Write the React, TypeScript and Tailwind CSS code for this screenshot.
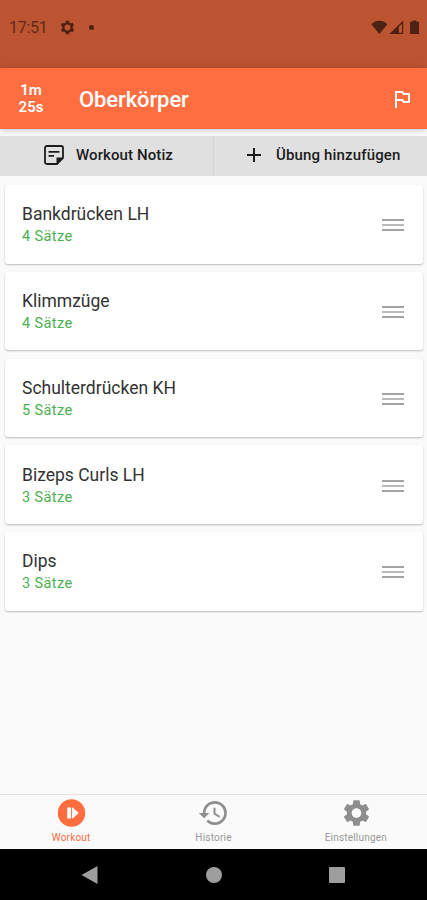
import { MdAdd, MdHistory, MdOutlinedFlag, MdSettings } from 'react-icons/md';

type Exercise = {
  name: string;
  sets: number;
};

const exercises: Exercise[] = [
  { name: 'Bankdrücken LH', sets: 4 },
  { name: 'Klimmzüge', sets: 4 },
  { name: 'Schulterdrücken KH', sets: 5 },
  { name: 'Bizeps Curls LH', sets: 3 },
  { name: 'Dips', sets: 3 },
];

function StatusGear() {
  return (
    <svg className="ml-[13px] mt-[3px]" width="15" height="15" viewBox="0 0 16 16" fill="none" stroke="currentColor">
      <circle cx="8" cy="8" r="4.500" strokeWidth="2.600" />
      <path
        d="M8 .8v2.400M8 12.800v2.400M1.760 4.400l2.100 1.200M12.140 10.400l2.100 1.200M1.760 11.600l2.100-1.200M12.140 5.600l2.100-1.200"
        strokeWidth="3.400"
      />
    </svg>
  );
}

function StatusBar() {
  return (
    <div className="h-[68px] bg-[#bc5331] flex items-start pt-[17px] pl-[9px] pr-[7px] text-[#4d2114]">
      <span className="text-[16px] leading-[22px] w-[38px] tracking-[-0.3px] whitespace-nowrap text-[#622a19]">17:51</span>
      <StatusGear />
      <span className="ml-[14px] mt-[8px] size-[5px] rounded-full bg-[#4d2114]" />
      <svg className="ml-auto mt-[3px]" width="49" height="15" viewBox="0 0 49 15" fill="currentColor">
        <path d="M.4 4.200C4.800-.4 12-.4 16.400 4.200L8.400 14z" />
        <path d="M18.400 14L32.200 .5V14zM27.800 6.800V12.700H31V3.800z" fillRule="evenodd" />
        <path d="M39 1.800h2.500V.4h4v1.400H48V14H39z" />
      </svg>
    </div>
  );
}

function NoteIcon() {
  return (
    <svg className="-mt-[2px]" width="20" height="20" viewBox="0 0 20 20" fill="none" stroke="currentColor" strokeWidth="1.800">
      <path d="M13 19H2.800A1.800 1.800 0 0 1 1 17.200V2.800A1.800 1.800 0 0 1 2.800 1H17.200A1.800 1.800 0 0 1 19 2.800V13z" />
      <path d="M12.500 19.500V12.500H19.500z" fill="currentColor" stroke="none" />
      <path d="M4.500 6.800H15.500M4.500 10.800H10" />
    </svg>
  );
}

function WorkoutIcon() {
  return (
    <svg className="translate-x-[0.500px]" width="28" height="28" viewBox="0 0 28 28">
      <circle cx="14" cy="14" r="13.700" fill="#ff6c3e" />
      <path d="M9.700 8.500h3.900v11H9.700zM14.600 8.500h.6l6 5.500-6 5.500h-.6z" fill="#fff" />
    </svg>
  );
}

function DragHandle() {
  return (
    <div className="w-[22px] mt-[2px] flex flex-col gap-[3px]">
      <div className="h-[2px] bg-[#a3a3a3]" />
      <div className="h-[2px] bg-[#b9b9b9]" />
      <div className="h-[2px] bg-[#a3a3a3]" />
    </div>
  );
}

function ExerciseCard({ exercise }: { exercise: Exercise }) {
  return (
    <div className="h-[78.500px] bg-white rounded-[3px] shadow-[0_1px_2px_rgba(0,0,0,0.26)] flex items-center justify-between pl-[17px] pr-[19.500px]">
      <div className="pt-[2px]">
        <div className="text-[17.500px] leading-[23px] text-[#333]">{exercise.name}</div>
        <div className="text-[14.500px] leading-[21px] text-[#4caf50] tracking-[0.400px]">{exercise.sets} Sätze</div>
      </div>
      <DragHandle />
    </div>
  );
}

export default function App() {
  return (
    <div className="w-full h-[900px] bg-[#fafafa] flex flex-col overflow-hidden font-['Roboto',sans-serif]">
      <StatusBar />

      <header className="h-[61px] bg-[#ff6e40] text-white flex items-center pr-[13px] shadow-[0_1px_6px_rgba(0,0,0,0.22)]">
        <div className="w-[62px] text-center text-[15px] leading-[17px] font-semibold">
          1m
          <br />
          25s
        </div>
        <h1 className="ml-[17px] pt-[2px] text-[22px] leading-[28px] font-medium tracking-[-0.1px]">Oberkörper</h1>
        <MdOutlinedFlag className="ml-auto size-6" />
      </header>

      <div className="mt-[7px] h-10 bg-[#e0e0e0] flex text-[15px] font-medium text-[#1c1c1c]">
        <button className="w-[214px] flex items-center pl-[44px] border-r border-[#d4d4d4]">
          <NoteIcon />
          <span className="ml-[12px] -mt-[2px] tracking-[0.1px]">Workout Notiz</span>
        </button>
        <button className="flex-1 flex items-center pl-[28px]">
          <MdAdd className="-mt-[2px] size-6" />
          <span className="ml-[10px] -mt-[2px] tracking-[0.150px] whitespace-nowrap">Übung hinzufügen</span>
        </button>
      </div>

      <main className="flex-1 pt-[9px] pl-[5px] pr-1 flex flex-col gap-[8.300px]">
        {exercises.map((exercise) => (
          <ExerciseCard key={exercise.name} exercise={exercise} />
        ))}
      </main>

      <nav className="h-[55px] border-t border-[#e2e2e2] grid grid-cols-3 text-[10px] leading-[12px] text-[#999]">
        <div className="flex flex-col items-center pt-1 text-[#ff6c3e]">
          <WorkoutIcon />
          <span className="mt-[5px] tracking-[0.2px]">Workout</span>
        </div>
        <div className="flex flex-col items-center pt-[2px]">
          <MdHistory className="size-8 translate-x-[0.500px] text-[#8e8e8e]" />
          <span className="mt-[3px] tracking-[0.2px]">Historie</span>
        </div>
        <div className="flex flex-col items-center pt-[2px]">
          <MdSettings className="size-8 translate-x-[0.500px] text-[#8e8e8e]" />
          <span className="mt-[3px] tracking-[0.2px]">Einstellungen</span>
        </div>
      </nav>

      <div className="h-[51px] bg-black flex items-center text-[#9e9e9e]">
        <svg className="ml-[81px]" width="17" height="18" viewBox="0 0 17 18" fill="currentColor">
          <path d="M16.500 0V18L.5 9z" />
        </svg>
        <div className="ml-[108px] size-4 rounded-full bg-[#9e9e9e]" />
        <div className="ml-[107px] size-4 rounded-[1px] bg-[#9e9e9e]" />
      </div>
    </div>
  );
}
